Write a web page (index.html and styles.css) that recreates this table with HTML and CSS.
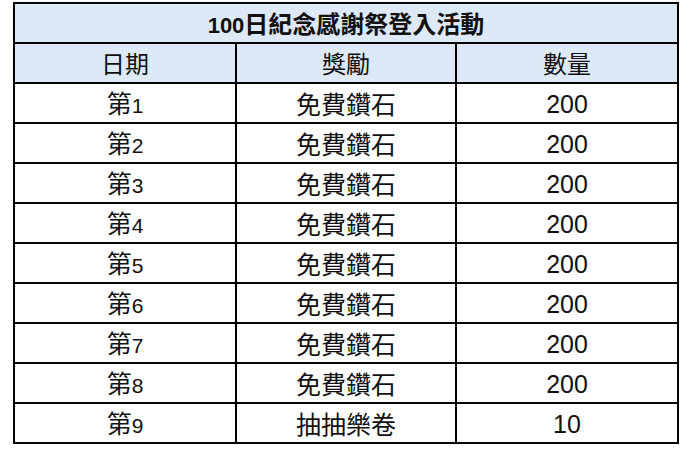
FILE: index.html
```html
<!DOCTYPE html>
<html lang="zh-Hant">
<head>
<meta charset="utf-8">
<link rel="stylesheet" href="styles.css">
</head>
<body>
<table class="sheet">
  <colgroup>
    <col class="c1"><col class="c2"><col class="c3">
  </colgroup>
  <tr class="title"><td colspan="3"><span class="num">100</span>日紀念感謝祭登入活動</td></tr>
  <tr class="head"><td>日期</td><td>獎勵</td><td>數量</td></tr>
  <tr><td>第<span class="num">1</span></td><td>免費鑽石</td><td class="num">200</td></tr>
  <tr><td>第<span class="num">2</span></td><td>免費鑽石</td><td class="num">200</td></tr>
  <tr><td>第<span class="num">3</span></td><td>免費鑽石</td><td class="num">200</td></tr>
  <tr><td>第<span class="num">4</span></td><td>免費鑽石</td><td class="num">200</td></tr>
  <tr><td>第<span class="num">5</span></td><td>免費鑽石</td><td class="num">200</td></tr>
  <tr><td>第<span class="num">6</span></td><td>免費鑽石</td><td class="num">200</td></tr>
  <tr><td>第<span class="num">7</span></td><td>免費鑽石</td><td class="num">200</td></tr>
  <tr><td>第<span class="num">8</span></td><td>免費鑽石</td><td class="num">200</td></tr>
  <tr><td>第<span class="num">9</span></td><td>抽抽樂卷</td><td class="num">10</td></tr>
</table>
</body>
</html>
```
FILE: styles.css
```css
html, body {
  margin: 0;
  padding: 0;
  background: #ffffff;
}
body {
  padding: 2px 0 0 13px;
  font-family: "Noto Sans CJK TC", "Liberation Sans", sans-serif;
  color: #111;
}
.sheet {
  border-collapse: collapse;
  width: 664px;
  table-layout: fixed;
}
.c1 { width: 222px; }
.c2 { width: 220px; }
.c3 { width: 222px; }
.sheet td {
  border: 2px solid #000;
  height: 38px;
  padding: 0;
  text-align: center;
  vertical-align: middle;
  font-size: 25px;
  line-height: 24px;
  font-weight: 400;
}
.sheet td.num {
  padding-top: 2px;
  height: 36px;
}
.num {
  font-family: "Liberation Sans", sans-serif;
  font-size: 21px;
  line-height: 20px;
}
.title td, .head td {
  background: #dde9f6;
}
.head td {
  font-size: 24px;
}
.title td {
  font-weight: 700;
  font-size: 24px;
}
.title .num {
  font-size: 22px;
}
```
